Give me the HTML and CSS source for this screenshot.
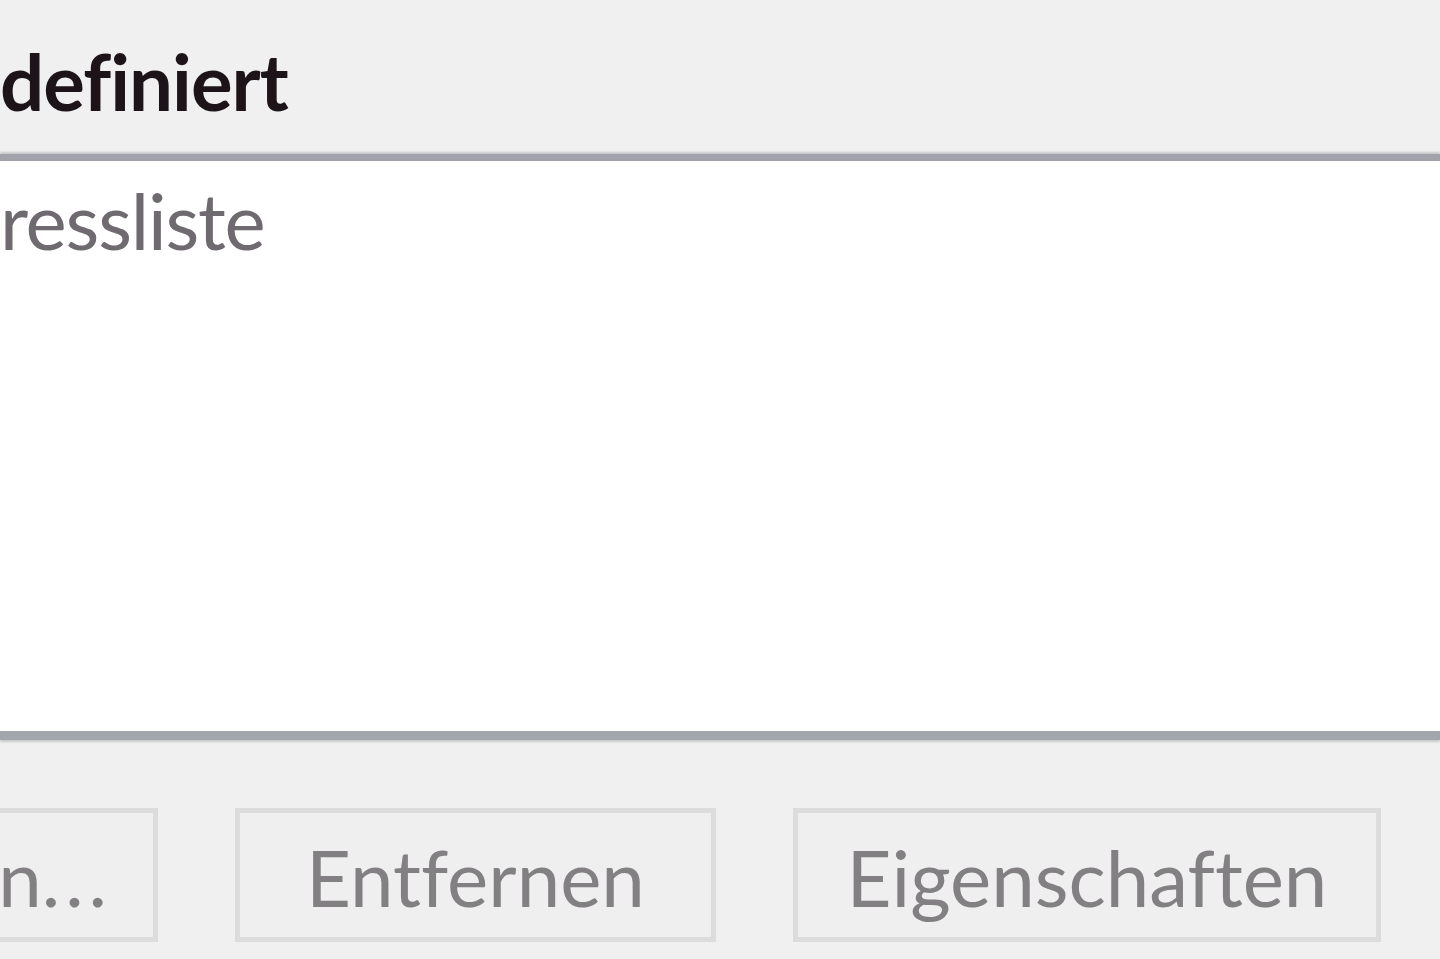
FILE: index.html
```html
<!DOCTYPE html>
<html lang="de">
<head>
<meta charset="utf-8">
<title>Dialog</title>
<link rel="stylesheet" href="styles.css">
</head>
<body>
<div class="dialog">
  <div class="group-label">definiert</div>
  <div class="list">
    <div class="list-item">ressliste</div>
  </div>
  <div class="buttons">
    <div class="btn btn-first">Hinzufügen<span class="dots">...</span></div>
    <div class="btn btn-entfernen">Entfernen</div>
    <div class="btn btn-eigen">Eigenschaften</div>
  </div>
</div>
</body>
</html>
```
FILE: styles.css
```css
html, body {
  margin: 0;
  padding: 0;
  background: #f0f0f0;
  overflow: hidden;
}
.dialog {
  width: 1440px;
  height: 959px;
  font-family: "Lato", "Open Sans", sans-serif;
  font-size: 78px;
  font-variant-ligatures: none;
  overflow: hidden;
}
.group-label {
  height: 154px;
  box-sizing: border-box;
  padding: 34px 0 0 0;
  line-height: 94px;
  font-weight: 700;
  color: #1c1418;
  letter-spacing: -1px;
}
.list {
  height: 570px;
  background: #ffffff;
  border-top: 7px solid #a0a3a9;
  border-bottom: 9px solid #a4a6ad;
  box-sizing: content-box;
  box-shadow: 0 -2px 2px #c8c9cc, 0 2px 2px #c8c9cc;
}
.list-item {
  color: #6e6a70;
  line-height: 94px;
  padding-top: 12px;
  letter-spacing: -1.2px;
}
.buttons {
  display: flex;
  gap: 77px;
  margin-top: 68px;
}
.btn {
  height: 134px;
  box-sizing: border-box;
  border: 5px solid #dcdcdc;
  background: #efefef;
  color: #838084;
  display: flex;
  align-items: center;
  justify-content: center;
  flex: none;
  padding-top: 3px;
}
.btn-first {
  width: 500px;
  margin-left: -342px;
  justify-content: flex-end;
  padding-right: 41px;
}
.dots {
  letter-spacing: 5px;
}
.btn-entfernen {
  width: 481px;
}
.btn-eigen {
  width: 588px;
}
```
